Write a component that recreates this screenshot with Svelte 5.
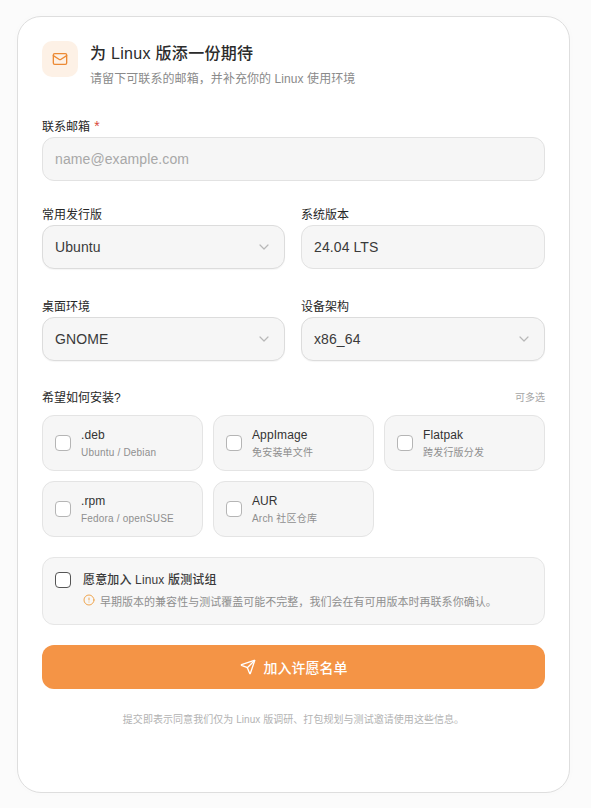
<script lang="ts">
	const packages = [
		{ name: '.deb', hint: 'Ubuntu / Debian' },
		{ name: 'AppImage', hint: '免安装单文件' },
		{ name: 'Flatpak', hint: '跨发行版分发' },
		{ name: '.rpm', hint: 'Fedora / openSUSE' },
		{ name: 'AUR', hint: 'Arch 社区仓库' }
	];
</script>

<main class="page">
	<form class="card" onsubmit={(e) => e.preventDefault()}>
		<header class="head">
			<div class="head-icon">
				<svg width="16" height="16" viewBox="0 0 24 24" fill="none" stroke="currentColor" stroke-width="2" stroke-linecap="round" stroke-linejoin="round">
					<rect x="2" y="4" width="20" height="16" rx="2" />
					<path d="m22 7-8.97 5.7a1.94 1.94 0 0 1-2.06 0L2 7" />
				</svg>
			</div>
			<div>
				<h2 class="title">为 Linux 版添一份期待</h2>
				<p class="subtitle">请留下可联系的邮箱，并补充你的 Linux 使用环境</p>
			</div>
		</header>

		<div class="field email">
			<span class="label">联系邮箱 <em>*</em></span>
			<input class="control" type="email" placeholder="name@example.com" />
		</div>

		<div class="row">
			<div class="field">
				<span class="label">常用发行版</span>
				<div class="control select">
					Ubuntu
					<svg class="chevron" width="16" height="16" viewBox="0 0 24 24" fill="none" stroke="currentColor" stroke-width="1.8" stroke-linecap="round" stroke-linejoin="round"><path d="m6 9 6 6 6-6" /></svg>
				</div>
			</div>
			<div class="field">
				<span class="label">系统版本</span>
				<input class="control" type="text" value="24.04 LTS" />
			</div>
		</div>

		<div class="row second">
			<div class="field">
				<span class="label">桌面环境</span>
				<div class="control select">
					GNOME
					<svg class="chevron" width="16" height="16" viewBox="0 0 24 24" fill="none" stroke="currentColor" stroke-width="1.8" stroke-linecap="round" stroke-linejoin="round"><path d="m6 9 6 6 6-6" /></svg>
				</div>
			</div>
			<div class="field">
				<span class="label">设备架构</span>
				<div class="control select">
					x86_64
					<svg class="chevron" width="16" height="16" viewBox="0 0 24 24" fill="none" stroke="currentColor" stroke-width="1.8" stroke-linecap="round" stroke-linejoin="round"><path d="m6 9 6 6 6-6" /></svg>
				</div>
			</div>
		</div>

		<div class="install-head">
			<span class="label">希望如何安装?</span>
			<span class="multi">可多选</span>
		</div>
		<div class="options">
			{#each packages as pkg}
				<div class="option">
					<span class="box"></span>
					<div>
						<div class="opt-name">{pkg.name}</div>
						<div class="opt-hint">{pkg.hint}</div>
					</div>
				</div>
			{/each}
		</div>

		<div class="beta">
			<span class="box dark"></span>
			<div>
				<div class="beta-title">愿意加入 Linux 版测试组</div>
				<div class="beta-note">
					<svg width="12" height="12" viewBox="0 0 24 24" fill="none" stroke="currentColor" stroke-width="2" stroke-linecap="round" stroke-linejoin="round">
						<circle cx="12" cy="12" r="10" />
						<path d="M12 8v4" />
						<path d="M12 16h.01" />
					</svg>
					<span>早期版本的兼容性与测试覆盖可能不完整，我们会在有可用版本时再联系你确认。</span>
				</div>
			</div>
		</div>

		<button class="submit" type="submit">
			<svg width="16" height="16" viewBox="0 0 24 24" fill="none" stroke="currentColor" stroke-width="2" stroke-linecap="round" stroke-linejoin="round">
				<path d="M14.536 21.686a.5.5 0 0 0 .937-.024l6.5-19a.496.496 0 0 0-.635-.635l-19 6.5a.5.5 0 0 0-.024.937l7.93 3.18a2 2 0 0 1 1.112 1.11z" />
				<path d="m21.854 2.147-10.94 10.939" />
			</svg>
			加入许愿名单
		</button>

		<p class="foot">提交即表示同意我们仅为 Linux 版调研、打包规划与测试邀请使用这些信息。</p>
	</form>
</main>

<style>
	:global(body) {
		margin: 0;
		background: #fbfbfb;
	}

	.page {
		padding: 16px 21px 15px 17px;
		font-family: 'Liberation Sans', 'Noto Sans CJK SC', sans-serif;
		color: #333;
	}

	.card {
		box-sizing: border-box;
		height: 777px;
		padding: 24px 24px 0;
		background: #fff;
		border: 1px solid #dedede;
		border-radius: 24px;
		box-shadow: 0 0 10px rgba(0, 0, 0, 0.015);
	}

	.head {
		display: flex;
		gap: 12px;
		height: 52px;
	}

	.head-icon {
		display: flex;
		align-items: center;
		justify-content: center;
		width: 36px;
		height: 36px;
		background: #fdf1e6;
		border-radius: 10px;
		color: #ec8a35;
	}

	.title {
		margin: 2px 0 0;
		font-size: 16px;
		line-height: 22px;
		font-weight: 500;
		letter-spacing: 0.3px;
		color: #2b2b2b;
		white-space: nowrap;
	}

	.subtitle {
		margin: 6px 0 0;
		font-size: 12px;
		line-height: 17px;
		letter-spacing: 0.08px;
		color: #8a8a8a;
		white-space: nowrap;
	}

	.field {
		display: flex;
		flex-direction: column;
		min-width: 0;
	}

	.email {
		margin-top: 25px;
	}

	.label {
		font-size: 12px;
		line-height: 18px;
		font-weight: 400;
		color: #262626;
	}

	.label em {
		margin-left: 1px;
		font-style: normal;
		font-size: 14px;
		line-height: 12px;
		color: #d9483b;
	}

	.field .label {
		margin-bottom: 1px;
	}

	.control {
		box-sizing: border-box;
		width: 100%;
		height: 44px;
		padding: 0 12px;
		background: #f6f6f6;
		border: 1px solid #e2e2e2;
		border-radius: 12px;
		font-family: inherit;
		font-size: 14px;
		letter-spacing: 0.1px;
		color: #3a3a3a;
		outline: none;
	}

	.control::placeholder {
		color: #a8a8a8;
	}

	.select {
		display: flex;
		align-items: center;
		justify-content: space-between;
		box-shadow: 0 1px 1px rgba(0, 0, 0, 0.04);
		border-color: #dcdcdc;
	}

	.chevron {
		color: #b8b8b8;
	}

	.row {
		display: grid;
		grid-template-columns: 243fr 244fr;
		gap: 16px;
		margin-top: 25px;
	}

	.row.second {
		margin-top: 29px;
	}

	.install-head {
		display: flex;
		align-items: center;
		justify-content: space-between;
		margin-top: 28px;
	}

	.multi {
		font-size: 10px;
		line-height: 16px;
		color: #a6a6a6;
	}

	.options {
		display: grid;
		grid-template-columns: repeat(3, 1fr);
		gap: 10px;
		margin-top: 8px;
	}

	.option {
		box-sizing: border-box;
		display: flex;
		align-items: center;
		gap: 10px;
		height: 56px;
		padding: 0 12px;
		background: #f6f6f6;
		border: 1px solid #e4e4e4;
		border-radius: 12px;
	}

	.box {
		flex: none;
		box-sizing: border-box;
		width: 16px;
		height: 16px;
		background: #fff;
		border: 1px solid #b5b5b5;
		border-radius: 4px;
	}

	.box.dark {
		border-color: #555;
	}

	.opt-name {
		font-size: 12px;
		line-height: 16px;
		letter-spacing: 0.1px;
		color: #333;
	}

	.opt-hint {
		margin-top: 3px;
		font-size: 10px;
		line-height: 14px;
		letter-spacing: 0.2px;
		color: #8f8f8f;
		white-space: nowrap;
	}

	.beta {
		box-sizing: border-box;
		display: flex;
		gap: 12px;
		height: 68px;
		margin-top: 20px;
		padding: 14px 12px 0;
		background: #f7f7f7;
		border: 1px solid #e6e6e6;
		border-radius: 12px;
	}

	.beta-title {
		font-size: 12px;
		line-height: 16px;
		font-weight: 500;
		letter-spacing: 0.15px;
		color: #3a3a3a;
	}

	.beta-note {
		display: flex;
		align-items: center;
		gap: 5px;
		margin-top: 6px;
		font-size: 11px;
		line-height: 14px;
		letter-spacing: 0.02px;
		color: #8f8f8f;
		white-space: nowrap;
	}

	.beta-note svg {
		flex: none;
		margin-bottom: 3px;
		color: #f0a54e;
	}

	.submit {
		display: flex;
		align-items: center;
		justify-content: center;
		gap: 8px;
		width: 100%;
		height: 44px;
		margin-top: 20px;
		background: #f49446;
		border: none;
		border-radius: 12px;
		font-family: inherit;
		font-size: 14px;
		font-weight: 500;
		color: #fff;
	}

	.foot {
		margin: 24px 0 0;
		text-align: center;
		font-size: 10px;
		line-height: 14px;
		letter-spacing: 0.05px;
		color: #b3b3b3;
	}
</style>
